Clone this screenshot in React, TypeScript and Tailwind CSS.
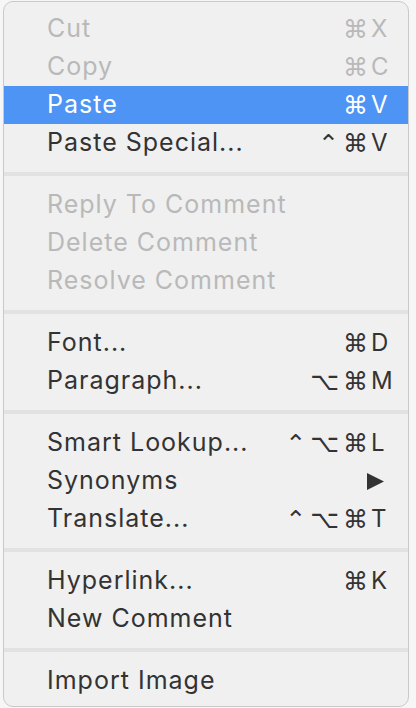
import React from "react";

type Item = { label: string; mods?: string[]; key?: string; disabled?: boolean; active?: boolean; arrow?: boolean };

const groups: Item[][] = [
  [
    { label: "Cut", mods: ["⌘"], key: "X", disabled: true },
    { label: "Copy", mods: ["⌘"], key: "C", disabled: true },
    { label: "Paste", mods: ["⌘"], key: "V", active: true },
    { label: "Paste Special...", mods: ["⌃", "⌘"], key: "V" },
  ],
  [
    { label: "Reply To Comment", disabled: true },
    { label: "Delete Comment", disabled: true },
    { label: "Resolve Comment", disabled: true },
  ],
  [
    { label: "Font...", mods: ["⌘"], key: "D" },
    { label: "Paragraph...", mods: ["⌥", "⌘"], key: "M" },
  ],
  [
    { label: "Smart Lookup...", mods: ["⌃", "⌥", "⌘"], key: "L" },
    { label: "Synonyms", arrow: true },
    { label: "Translate...", mods: ["⌃", "⌥", "⌘"], key: "T" },
  ],
  [
    { label: "Hyperlink...", mods: ["⌘"], key: "K" },
    { label: "New Comment" },
  ],
  [{ label: "Import Image" }],
];

function Row({ it }: { it: Item }) {
  const color = it.active ? "text-white bg-[#4e94f4]" : it.disabled ? "text-[#b9b9b9]" : "text-[#333333]";
  return (
    <div className={`flex items-center h-[38px] ${color}`}>
      <span className="pl-[43px] flex-1 whitespace-nowrap tracking-[1px] mt-[-1px]">{it.label}</span>
      {it.mods && (
        <span
          className="flex justify-end items-center gap-[4px] text-[25px]"
          style={{ fontFamily: "'DejaVu Sans', sans-serif" }}
        >
          {it.mods.map((m, i) => (
            <span key={i}>{m}</span>
          ))}
        </span>
      )}
      {it.arrow ? (
        <span className="w-[40px] flex items-center">
          <svg width="17" height="17" viewBox="0 0 17 17" className="ml-[-1px]">
            <polygon points="0,0 17,8.5 0,17" fill="#333333" />
          </svg>
        </span>
      ) : (
        <span className="w-[40px] pl-[3px] text-[24px]">{it.key ?? ""}</span>
      )}
    </div>
  );
}

export default function App() {
  return (
    <div className="w-[416px] h-[708px] bg-[#f6f6f6] pt-[1px] px-[3px]" style={{ fontFamily: "Inter, 'DejaVu Sans', sans-serif" }}>
      <div className="w-[406px] h-[706px] bg-[#f0f0f0] border border-[#c9c9c9] rounded-[10px] overflow-hidden pt-[8px] text-[25px] leading-none">
        {groups.map((g, gi) => (
          <React.Fragment key={gi}>
            {gi > 0 && (
              <div className="py-[10px]">
                <div className="h-[4px] bg-[#e2e2e2]" />
              </div>
            )}
            {g.map((it) => (
              <Row key={it.label} it={it} />
            ))}
          </React.Fragment>
        ))}
      </div>
    </div>
  );
}
